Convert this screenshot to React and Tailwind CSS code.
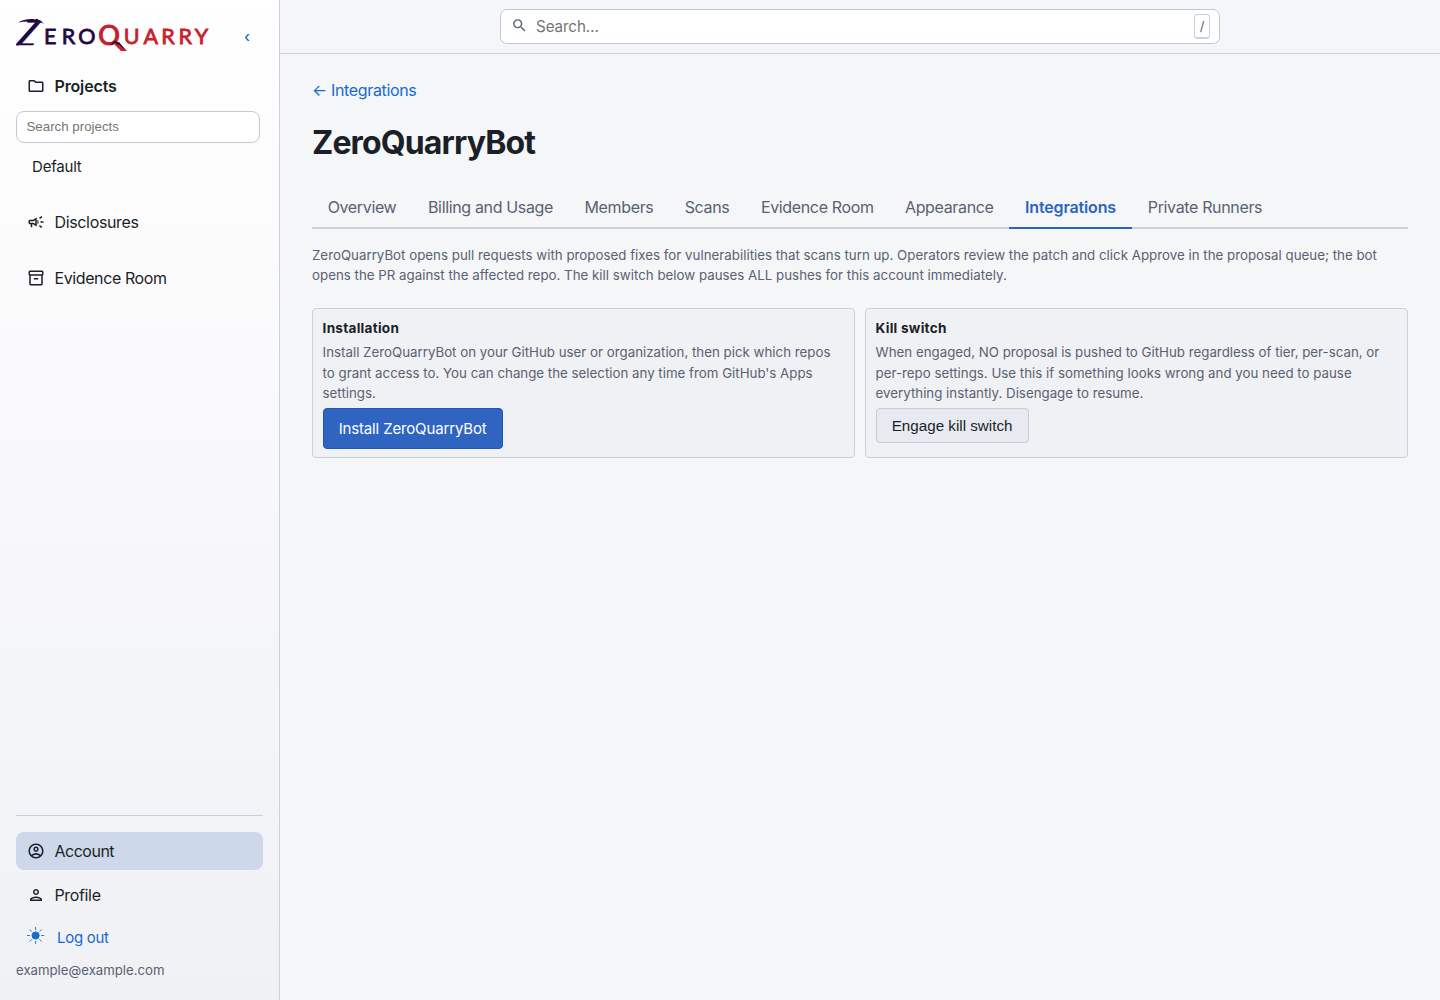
// src/App.jsx
import React from "react";
import {
  MdOutlineAccountCircle,
  MdOutlineCampaign,
  MdOutlineFolder,
  MdOutlineInventory2,
  MdOutlinePerson,
  MdSearch,
} from "react-icons/md";

const TABS = [
  { label: "Overview", width: "w-[100px]" },
  { label: "Billing and Usage", width: "w-[157px]" },
  { label: "Members", width: "w-[100px]" },
  { label: "Scans", width: "w-[76px]" },
  { label: "Evidence Room", width: "w-[144.5px]" },
  { label: "Appearance", width: "w-[119.5px]" },
  { label: "Integrations", width: "w-[123px]", active: true },
  { label: "Private Runners", width: "w-[146px]" },
];

function Logo() {
  return (
    <svg viewBox="0 0 194 36" className="h-[36px] w-[194px] overflow-visible" aria-label="ZeroQuarry">
      <g fontFamily="Lato, sans-serif" fill="#22073f" stroke="#22073f">
        <text x="0" y="27.700" fontSize="34" fontWeight="300" strokeWidth="0.3" textLength="16" lengthAdjust="spacingAndGlyphs" transform="translate(11.500 0) skewX(-18)">Z</text>
        <text x="28 45.800 62.300" y="27.400" fontSize="21.5" strokeWidth="0.8">ERO</text>
      </g>
      <g fontFamily="Lato, sans-serif" fill="#c9202b" stroke="#c9202b">
        <text x="82.300" y="28" fontSize="27" strokeWidth="1.1">O</text>
        <text x="107.800 127.600 145.200 162.600 178.700" y="27.400" fontSize="21.5" strokeWidth="0.8">UARRY</text>
      </g>
      {/* pickaxe handle and head */}
      <path d="m20 4.500 3 2L3 28.500H.2L0 27Z" fill="#22073f" />
      <path d="M2 5.500C9 2 15 1.500 19 2.500l2-.8 2 1.300c2 1 3.500 2.200 5 4-2-1.200-4-1.600-6-1.500C15 4.200 9 4 2 5.500Z" fill="#22073f" />
      {/* peak across the Q */}
      <path d="m98 27 3-3 10 10h-6Z" fill="#c9202b" />
      <path d="m94 28 5-4.500 2.500 2 1.500-.5 7.500 9-7.500-6.500-1.500.2-2.500-2.200-2.500 2Z" fill="#22073f" />
    </svg>
  );
}

function SunIcon() {
  return (
    <svg viewBox="0 0 18 18" className="h-[18px] w-[18px]" stroke="currentColor" strokeWidth="0.9">
      <circle cx="8.600" cy="8.500" r="3.600" fill="currentColor" />
      <path d="M8.600 0v3M8.600 14v3M0 8.500h3M14.200 8.500h3M2.600 2.500l2.100 2.100M12.500 12.400l2.100 2.100M2.600 14.500l2.100-2.100M12.500 4.600l2.100-2.100" />
    </svg>
  );
}

function NavItem({ icon: Icon, label, className = "" }) {
  return (
    <a href="#" className={`flex h-[38px] items-center gap-[10px] rounded-lg pl-[10.500px] text-base text-[#1b1f27] ${className}`}>
      <Icon className="mb-px h-[18px] w-[18px]" />
      <span>{label}</span>
    </a>
  );
}

function Sidebar() {
  return (
    <aside className="flex w-[280px] shrink-0 flex-col border-r border-[#ccd0da] bg-linear-to-b from-white to-[#f0f1f5] px-4">
      <div className="flex h-[67px] items-center justify-between pt-0.5 pr-[13px]">
        <Logo />
        <button type="button" className="pt-1 text-[15px] leading-none font-medium text-[#1769d2]">
          ‹
        </button>
      </div>

      <NavItem icon={MdOutlineFolder} label="Projects" className="font-semibold tracking-[-0.150px]" />
      <input
        type="text"
        placeholder="Search projects"
        className="mt-[6px] h-8 w-[244px] rounded-lg border border-[#c3c8d6] bg-white px-[9.500px] pb-[2px] font-['Liberation_Sans',sans-serif] text-[13.3px] placeholder:text-[#757575]"
      />
      <a href="#" className="mt-3 pl-4 text-[15px] leading-6 tracking-[-0.2px] text-[#1b1f27]">
        Default
      </a>
      <NavItem icon={MdOutlineCampaign} label="Disclosures" className="mt-6 tracking-[-0.350px]" />
      <NavItem icon={MdOutlineInventory2} label="Evidence Room" className="mt-[18px] tracking-[-0.4px]" />

      <div className="mt-auto w-[247px] border-t border-[#ccd0da] pt-4">
        <NavItem icon={MdOutlineAccountCircle} label="Account" className="bg-[#cdd9eb] tracking-[-0.5px]" />
        <NavItem icon={MdOutlinePerson} label="Profile" className="mt-[6px] tracking-[-0.35px]" />
        <button type="button" className="mt-[5px] flex h-[34px] items-center gap-3 pl-[11px] text-[#1769d2]">
          <SunIcon />
          <span className="pt-[5px] text-[15px] tracking-[-0.3px]">Log out</span>
        </button>
        <p className="mt-[7px] mb-5 text-[13.2px] leading-5 text-[#5a6172]">example@example.com</p>
      </div>
    </aside>
  );
}

function SearchBar() {
  return (
    <header className="flex h-[54px] justify-center border-b border-[#ccd0da] pt-[9px]">
      <div className="flex h-[35px] w-[720px] items-center rounded-[7px] border border-[#c3c8d6] bg-white pr-[9px] pl-[10px]">
        <MdSearch className="mb-[3px] h-[17px] w-[17px] text-[#5a6172]" />
        <input
          type="text"
          placeholder="Search…"
          className="ml-2 min-w-0 flex-1 pt-px text-[15.200px] tracking-[-0.1px] placeholder:text-[#757575]"
        />
        <kbd className="flex h-[25px] w-4 items-center justify-center rounded-[4px] border border-b-2 border-[#ccd0da] pt-px font-['Inter',sans-serif] text-[13px] text-[#5a6172]">
          /
        </kbd>
      </div>
    </header>
  );
}

function Card({ title, text, children }) {
  return (
    <section className="h-[150px] flex-1 rounded-[4px] border border-[#ccd0da] bg-[#f0f1f5] px-[9.600px] pt-[9px]">
      <h2 className="text-[13.600px] leading-5 font-bold tracking-[0.250px] text-[#1b1f27]">{title}</h2>
      <p className="mt-[4.400px] text-[13.310px] leading-[20.400px] whitespace-pre-line text-[#5a6172]">{text}</p>
      {children}
    </section>
  );
}

export default function App() {
  return (
    <div className="flex h-[1000px] w-full overflow-hidden bg-[#f4f6f8] font-['Inter',sans-serif]">
      <Sidebar />

      <div className="min-w-0 flex-1">
        <SearchBar />

        <main className="px-8 pt-6">
          <a href="#" className="block text-base leading-6 tracking-[-0.350px] text-[#1769d2]">
            ← Integrations
          </a>
          <h1 className="mt-[17px] text-[32px] leading-[48px] font-bold tracking-[-0.850px] text-[#1b1f27]">
            ZeroQuarryBot
          </h1>

          {/* TABS */}
          <nav className="mt-5 flex h-[42px] border-b-2 border-[#ccd2da]">
            {TABS.map((tab) => (
              <a
                key={tab.label}
                href="#"
                className={`flex h-[42px] items-center justify-center border-b-2 text-base whitespace-nowrap ${tab.width} ${
                  tab.active
                    ? "border-[#2c63bf] font-semibold tracking-[-0.150px] text-[#2c63bf]"
                    : "border-transparent tracking-[-0.350px] text-[#5a6172]"
                }`}
              >
                {tab.label}
              </a>
            ))}
          </nav>

          <p className="mt-4 text-[13.310px] leading-[20.400px] tracking-[0.008px] whitespace-pre-line text-[#5a6172]">
            {"ZeroQuarryBot opens pull requests with proposed fixes for vulnerabilities that scans turn up. Operators review the patch and click Approve in the proposal queue; the bot\nopens the PR against the affected repo. The kill switch below pauses ALL pushes for this account immediately."}
          </p>

          {/* CARDS */}
          <div className="mt-[22px] flex gap-[10px]">
            <Card
              title="Installation"
              text={"Install ZeroQuarryBot on your GitHub user or organization, then pick which repos\nto grant access to. You can change the selection any time from GitHub's Apps\nsettings."}
            >
              <button type="button" className="mt-[5px] h-[41px] w-[180px] rounded-[4px] border border-[#1d55b0] bg-[#2f65c1] pt-px text-[15px] tracking-[-0.150px] text-white">
                Install ZeroQuarryBot
              </button>
            </Card>
            <Card
              title="Kill switch"
              text={"When engaged, NO proposal is pushed to GitHub regardless of tier, per-scan, or\nper-repo settings. Use this if something looks wrong and you need to pause\neverything instantly. Disengage to resume."}
            >
              <button type="button" className="mt-[5px] h-[35px] w-[153px] rounded-[4px] border border-[#c5cbd8] bg-[#e7eaf0] pt-px font-['Liberation_Sans',sans-serif] text-[15.200px] text-[#1b1f27]">
                Engage kill switch
              </button>
            </Card>
          </div>
        </main>
      </div>
    </div>
  );
}
